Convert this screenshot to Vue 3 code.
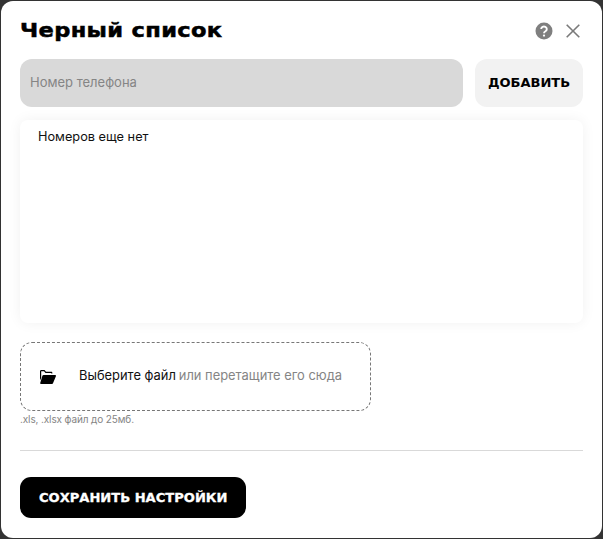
<template>
  <div class="page">
    <div class="modal">
      <header class="head">
        <h1 class="title">Черный список</h1>
        <div class="tools">
          <svg class="help" width="18" height="18" viewBox="0 0 18 18">
            <circle cx="9" cy="9" r="8.5" fill="#7f7f7f" />
            <path d="M6.2 7.1a2.8 2.6 0 1 1 4.3 2.2c-1 .6-1.5 1-1.5 2" fill="none" stroke="#fff" stroke-width="1.9" />
            <circle cx="9" cy="13.6" r="1.15" fill="#fff" />
          </svg>
          <svg class="close" width="14" height="14" viewBox="0 0 14 14">
            <path d="M.7.7l12.6 12.6M13.3.7L.7 13.3" stroke="#7a7a7a" stroke-width="1.6" fill="none" />
          </svg>
        </div>
      </header>
      <div class="add-row">
        <div class="phone">Номер телефона</div>
        <button class="add">ДОБАВИТЬ</button>
      </div>
      <div class="list">Номеров еще нет</div>
      <div class="drop">
        <svg class="folder" width="16" height="14" viewBox="0 0 16 14">
          <path d="M0 1.3C0 .6.6 0 1.3 0h3.2l1.5 1.7h5.2c.7 0 1.2.5 1.2 1.2v.6h-1.2v-.5H5.5L4 1.2H1.2v6.5L0 10.5z" fill="#000" />
          <path d="M3.6 5h11.6c.6 0 1 .6.7 1.2l-2.8 6.9c-.2.5-.6.9-1.1.9H1c-.6 0-1-.6-.8-1.1l2.2-7.1c.2-.5.7-.8 1.2-.8z" fill="#000" />
        </svg>
        <span class="pick">Выберите файл</span>
        <span class="or">или перетащите его сюда</span>
      </div>
      <p class="hint">.xls, .xlsx файл до 25мб.</p>
      <div class="rule"></div>
      <button class="save"><span class="save-label">СОХРАНИТЬ НАСТРОЙКИ</span></button>
    </div>
  </div>
</template>

<script setup>
</script>

<style>
html, body { margin: 0; background: #333; }
</style>

<style scoped>
.page {
  width: 603px;
  height: 539px;
  box-sizing: border-box;
  padding: 1px;
  background: #333;
  overflow: hidden;
}
.modal {
  height: 537px;
  box-sizing: border-box;
  background: #fff;
  border-radius: 12px;
  padding: 0 19px;
  display: flex;
  flex-direction: column;
  align-items: stretch;
  font-family: Inter, "Noto Sans", sans-serif;
}
.head {
  height: 58px;
  display: flex;
  align-items: center;
  justify-content: space-between;
  flex: none;
}
.title {
  margin: 0;
  font: 700 19.5px "DejaVu Sans", sans-serif;
  letter-spacing: 0.3px;
  color: #000;
  -webkit-text-stroke: 0.5px #000;
  transform: scaleX(1.155);
  transform-origin: left center;
}
.tools {
  display: flex;
  align-items: center;
  gap: 13px;
  margin-right: 3px;
  margin-top: 2px;
}
.add-row {
  display: flex;
  gap: 12px;
  flex: none;
}
.phone {
  flex: 1;
  height: 48px;
  box-sizing: border-box;
  background: #d9d9d9;
  border-radius: 12px;
  padding: 0 0 2px 10px;
  display: flex;
  align-items: center;
  font-size: 13px;
  color: #858585;
}
.add {
  width: 108px;
  height: 48px;
  border: 0;
  padding: 0 0 2px;
  border-radius: 12px;
  background: #f2f2f2;
  color: #000;
  font: 700 13px "DejaVu Sans", sans-serif;
}
.list {
  margin-top: 13px;
  height: 203px;
  flex: none;
  border-radius: 8px;
  box-shadow: 0 0 14px rgba(0, 0, 0, 0.06);
  padding: 9px 18px;
  box-sizing: border-box;
  font-size: 12.75px;
  line-height: 16px;
  color: #111;
}
.drop {
  margin-top: 19px;
  width: 351px;
  height: 69px;
  box-sizing: border-box;
  flex: none;
  border: 1px dashed #777;
  border-radius: 12px;
  display: flex;
  align-items: center;
  padding: 0 0 2px 19px;
  font-size: 12.9px;
}
.folder { margin: 3px 23px 0 0; flex: none; }
.pick { color: #111; margin-right: 3px; }
.or { color: #858585; }
.hint {
  margin: 2px 0 0;
  font-size: 10px;
  line-height: 13px;
  color: #858585;
  letter-spacing: -0.12px;
}
.rule {
  margin-top: 24px;
  height: 1px;
  background: #d9d9d9;
  flex: none;
}
.save {
  margin-top: 26px;
  width: 226px;
  height: 41px;
  border: 0;
  padding: 0;
  border-radius: 11px;
  background: #000;
  color: #fff;
  font: 700 12.5px "DejaVu Sans", sans-serif;
  flex: none;
}
.save-label {
  display: inline-block;
  transform: scaleX(1.045);
  -webkit-text-stroke: 0.3px #fff;
}
</style>
